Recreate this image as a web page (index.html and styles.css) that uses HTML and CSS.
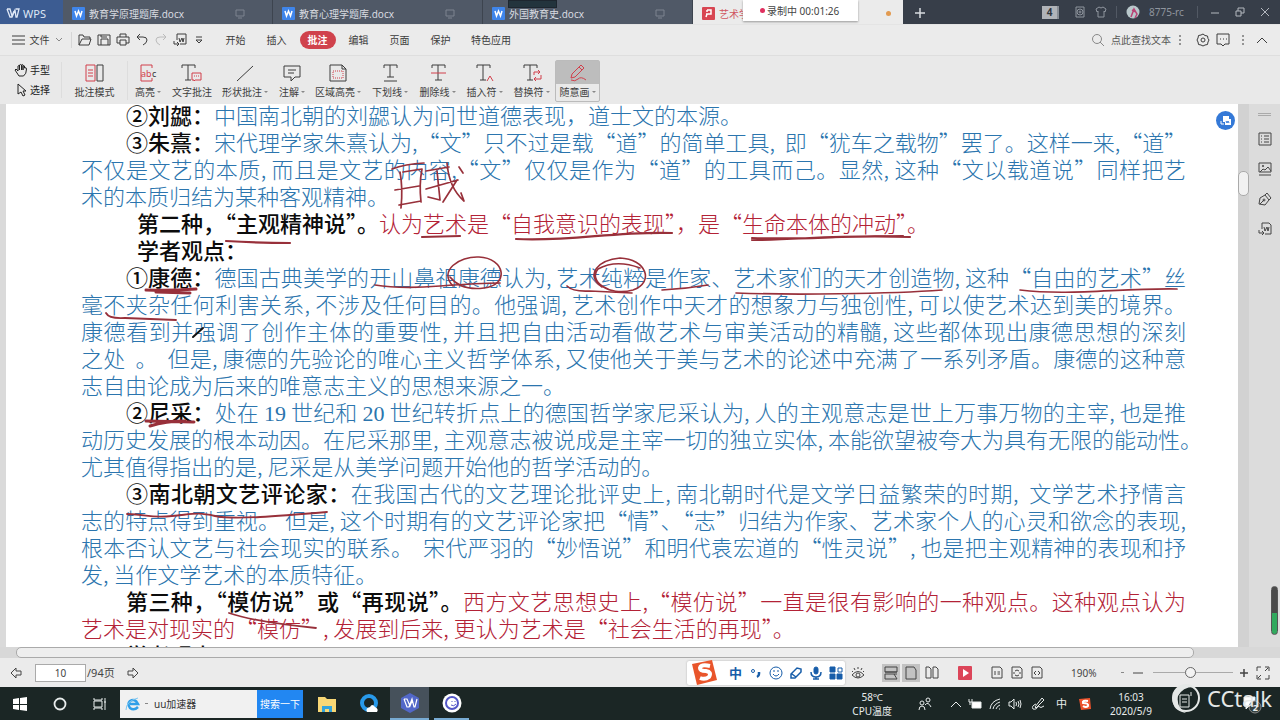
FILE: index.html
```html
<!DOCTYPE html>
<html lang="zh-CN">
<head>
<meta charset="utf-8">
<title>WPS</title>
<link rel="stylesheet" href="styles.css">
</head>
<body>
<header class="titlebar">
  <button class="home"><svg width="14" height="11" viewBox="0 0 14 11"><path d="M1 1h3l2 7 2-5M1 1l3 8h2L9 2l1 7h1l2-8h-3" stroke-width="1.3"/></svg>WPS</button>
  <button class="tab"><svg class="doc-icon" width="13" height="13" viewBox="0 0 13 13"><rect width="13" height="13" rx="1"/><path d="M3 4l1.500 5 2-5 2 5L10 4"/></svg><span>教育学原理题库.docx</span><svg class="monitor" width="10" height="10" viewBox="0 0 10 10"><path d="M1 1h8v6H1zM3 9h4"/></svg></button>
  <button class="tab"><svg class="doc-icon" width="13" height="13" viewBox="0 0 13 13"><rect width="13" height="13" rx="1"/><path d="M3 4l1.500 5 2-5 2 5L10 4"/></svg><span>教育心理学题库.docx</span><svg class="monitor" width="10" height="10" viewBox="0 0 10 10"><path d="M1 1h8v6H1zM3 9h4"/></svg></button>
  <button class="tab"><svg class="doc-icon" width="13" height="13" viewBox="0 0 13 13"><rect width="13" height="13" rx="1"/><path d="M3 4l1.500 5 2-5 2 5L10 4"/></svg><span>外国教育史.docx</span><svg class="monitor" width="10" height="10" viewBox="0 0 10 10"><path d="M1 1h8v6H1zM3 9h4"/></svg></button>
  <button class="tab active"><svg class="doc-icon pdf" width="13" height="13" viewBox="0 0 13 13"><rect width="13" height="13" rx="1"/><path d="M5 3h4v4H5M5 3v2M5 7l-1 3M4 7h2"/></svg><span>艺术学</span><i class="unsaved"></i></button>
  <button class="add" aria-label="新建"><svg width="12" height="12" viewBox="0 0 12 12"><path d="M6 1v10M1 6h10" stroke-width="1.5"/></svg></button>
  <div class="window-tools">
    <span class="count">4</span>
    <svg width="12" height="12" viewBox="0 0 12 12"><path d="M2 1h8v10H2z"/><circle cx="6" cy="6" r="3"/><circle cx="6" cy="6" r="1"/></svg>
    <svg width="12" height="12" viewBox="0 0 12 12"><path d="M4 1L1 3l1 3 1-1v6h6V5l1 1 1-3-3-2-2 1z"/></svg>
    <i class="rule"></i>
    <svg width="14" height="14" viewBox="0 0 14 14"><circle cx="7" cy="7" r="6.500" fill="#b9c8cb" stroke="none"/><path d="M5 12l3-8 3 5-2 4M6 5l4 2" stroke="#b94375" stroke-width="1.500"/></svg>
    <span class="user">8775-rc</span>
    <i class="rule"></i>
    <button aria-label="最小化"><svg width="10" height="10" viewBox="0 0 10 10"><path d="M1 6h8"/></svg></button>
    <button aria-label="还原"><svg width="10" height="10" viewBox="0 0 10 10"><path d="M1 4h5v5H1zM3 4V1h6v5H6"/></svg></button>
    <button aria-label="关闭"><svg width="10" height="10" viewBox="0 0 10 10"><path d="M1 1l8 8M9 1L1 9"/></svg></button>
  </div>
  <div class="mini"></div>
  <div class="recording"><i></i>录制中 00:01:26</div>
</header>

<nav class="menu">
  <button class="file"><svg width="13" height="10" viewBox="0 0 13 10"><path d="M0 1h13M0 5h13M0 9h13"/></svg>文件<svg width="8" height="6" viewBox="0 0 8 6"><path d="M1 1l3 3 3-3" stroke="#888"/></svg></button>
  <div class="quick">
    <button aria-label="打开"><svg width="14" height="14" viewBox="0 0 14 14"><path d="M1 12V2h4l1 2h6v2M1 12L4 6h9l-2 6z"/></svg></button>
    <button aria-label="保存"><svg width="14" height="14" viewBox="0 0 14 14"><path d="M1 12V2h12v10H1M4 12V6h7v6M4 2v2h6"/></svg></button>
    <button aria-label="打印"><svg width="14" height="14" viewBox="0 0 14 14"><path d="M4 4V1h6v3M4 10H1V4h12v6h-3M4 7h6v5H4z"/></svg></button>
    <button aria-label="撤销"><svg width="14" height="14" viewBox="0 0 14 14"><path d="M5 1L2 4l3 3M2 4h6q4 0 4 3t-4 5"/></svg></button>
    <button aria-label="恢复" class="faint"><svg width="14" height="14" viewBox="0 0 14 14"><path d="M9 1l3 3-3 3M12 4H6Q2 4 2 7t4 5"/></svg></button>
    <button aria-label="导出"><svg width="14" height="14" viewBox="0 0 14 14"><path d="M4 7V1h9v10H7M6 5l1 4 2-4 1 4 1-4M1 8v3h5M4 9l2 2-2 2"/></svg></button>
    <button aria-label="更多"><svg width="10" height="8" viewBox="0 0 10 8"><path d="M2 1h6M2 4h6L5 7z"/></svg></button>
  </div>
  <div class="menu-tabs"><button>开始</button><button>插入</button><button class="on"><b>批注</b></button><button>编辑</button><button>页面</button><button>保护</button><button class="wide">特色应用</button></div>
  <div class="menu-right">
    <label for="find"><svg width="14" height="14" viewBox="0 0 14 14"><circle cx="6" cy="6" r="4.500" stroke="#888"/><path d="M9 9l4 4" stroke="#888"/></svg></label>
    <input id="find" placeholder="点此查找文本">
    <svg width="4" height="12" viewBox="0 0 4 12"><path d="M2 1v2M2 5v2M2 9v2"/></svg>
    <button class="gear" aria-label="设置"><svg width="14" height="14" viewBox="0 0 14 14"><path d="M7 1l2 1.500 2.500.5.500 2.500L13 7l-1 2-.5 2.500-2.500.5-2 1-2-1-2.500-.5L2 9 1 7l1-2 .5-2.500L5 2z"/><circle cx="7" cy="7" r="2"/></svg></button>
    <button aria-label="反馈"><svg width="14" height="14" viewBox="0 0 14 14"><path d="M1 1h12v10H9l-2 2-2-2H1zM4 6h1M7 6h1M10 6h1"/></svg></button>
    <svg class="dots" width="4" height="12" viewBox="0 0 4 12"><path d="M2 1v2M2 5v2M2 9v2"/></svg>
    <button aria-label="收起"><svg width="12" height="8" viewBox="0 0 12 8"><path d="M1 7l5-5 5 5"/></svg></button>
  </div>
</nav>

<section class="ribbon">
  <div class="pointer">
    <button><svg width="14" height="14" viewBox="0 0 14 14"><path d="M5 13L1 7l1-1 2 2V3q1-1 1.500 0V7 2Q7 1 7.500 2v5V2q1-1 1.500 0v5-4q1-1 1.500 0v2q2-1 2 1 0 5-3 7z"/></svg>手型</button>
    <button><svg width="14" height="14" viewBox="0 0 14 14"><path d="M4 1v10l3-2 2 4 2-1-2-4h3z"/></svg>选择</button>
  </div>
  <div class="mode"><button class="tool"><svg width="20" height="18" viewBox="0 0 20 18"><path d="M1 1h9v16H1zM3 6h5M3 9h5M3 12h5" class="r"/><path d="M12 1h6v16h-6z"/></svg><span>批注模式</span></button></div>
  <button class="tool w40"><svg width="20" height="18" viewBox="0 0 20 18"><path d="M14 4V1H3v16h11v-3" class="r"/><text x="3" y="13" fill="#d13f4b">ab</text><text x="14" y="13" fill="#333">c</text></svg><span class="more">高亮</span></button>
  <button class="tool w48"><svg width="22" height="18" viewBox="0 0 22 18"><path d="M1 4V1h13v3M7 1v15M4 16h6"/><path d="M11 9h9v7h-6l-1 1v-1h-2zM13 12h1M15 12h1M17 12h1" class="r"/></svg><span>文字批注</span></button>
  <button class="tool w58"><svg width="20" height="18" viewBox="0 0 20 18"><path d="M2 17L18 2"/></svg><span class="more">形状批注</span></button>
  <button class="tool w36"><svg width="20" height="18" viewBox="0 0 20 18"><path d="M2 2h16v11h-5l-4 4v-4H2zM6 6h8M6 9h6"/></svg><span class="more">注解</span></button>
  <button class="tool w56"><svg width="20" height="18" viewBox="0 0 20 18"><path d="M2 1h12l4 4v12H2zM14 1v4h4"/><path d="M5 7h10v7H5z" class="r" stroke-dasharray="1 1"/></svg><span class="more">区域高亮</span></button>
  <button class="tool w48"><svg width="20" height="18" viewBox="0 0 20 18"><path d="M4 4V1h13v3M10 1v12M7 13h7M4 17h13"/></svg><span class="more">下划线</span></button>
  <button class="tool"><svg width="20" height="18" viewBox="0 0 20 18"><path d="M4 4V1h13v3M10 1v15M7 16h7"/><path d="M3 9h15" class="r"/></svg><span class="more">删除线</span></button>
  <button class="tool"><svg width="20" height="18" viewBox="0 0 20 18"><path d="M2 4V1h13v3M8 1v15M5 16h6"/><path d="M12 17l3-5 3 5" class="r"/></svg><span class="more">插入符</span></button>
  <button class="tool"><svg width="20" height="18" viewBox="0 0 20 18"><path d="M2 4V1h13v3M8 1v15M5 16h6"/><path d="M12 11V8h6M16 6l2 2-2 2M19 11v4h-7M14 13l-2 2 2 2" class="r"/></svg><span class="more">替换符</span></button>
  <button class="tool draw"><i><svg width="20" height="18" viewBox="0 0 20 18"><path d="M4 10L13 1l3 3-9 9-4 1zM11 3l3 3M3 16q4 2 7-1t8 1" class="r"/></svg></i><span class="more">随意画</span></button>
</section>

<main class="workspace">
  <div class="gutter"></div>
  <article class="page">
    <p class="in"><b>②刘勰：</b>中国南北朝的刘勰认为问世道德表现，道士文的本源。</p>
    <p class="in full"><b>③朱熹：</b>宋代理学家朱熹认为,“文”只不过是载“道”的简单工具,&nbsp; 即“犹车之载物”罢了。这样一来,“道”</p>
    <p class="full">不仅是文艺的本质, 而且是文艺的内容,“文”仅仅是作为“道”的工具而己。显然, 这种“文以载道说”同样把艺</p>
    <p>术的本质归结为某种客观精神。</p>
    <p class="in2 red"><b>第二种，“主观精神说”。</b>认为艺术是“自我意识的表现”，是“生命本体的冲动”。</p>
    <p class="in2"><b>学者观点：</b></p>
    <p class="in full"><b>①康德：</b>德国古典美学的开山鼻祖康德认为, 艺术纯粹是作家、艺术家们的天才创造物, 这种“自由的艺术”丝</p>
    <p class="full">毫不夹杂任何利害关系, 不涉及任何目的。他强调, 艺术创作中天才的想象力与独创性, 可以使艺术达到美的境界。</p>
    <p class="full">康德看到并强调了创作主体的重要性, 并且把自由活动看做艺术与审美活动的精髓, 这些都体现出康德思想的深刻</p>
    <p class="full">之处&nbsp; 。&nbsp; 但是, 康德的先验论的唯心主义哲学体系, 又使他关于美与艺术的论述中充满了一系列矛盾。康德的这种意</p>
    <p>志自由论成为后来的唯意志主义的思想来源之一。</p>
    <p class="in full"><b>②尼采：</b>处在 <span class="num">19</span> 世纪和 <span class="num">20</span> 世纪转折点上的德国哲学家尼采认为, 人的主观意志是世上万事万物的主宰, 也是推</p>
    <p class="full hang">动历史发展的根本动因。在尼采那里, 主观意志被说成是主宰一切的独立实体, 本能欲望被夸大为具有无限的能动性。</p>
    <p>尤其值得指出的是, 尼采是从美学问题开始他的哲学活动的。</p>
    <p class="in full"><b>③南北朝文艺评论家：</b>在我国古代的文艺理论批评史上, 南北朝时代是文学日益繁荣的时期,&nbsp; 文学艺术抒情言</p>
    <p class="full">志的特点得到重视。 但是, 这个时期有的文艺评论家把“情”、“志”归结为作家、艺术家个人的心灵和欲念的表现,</p>
    <p class="full">根本否认文艺与社会现实的联系。&nbsp; 宋代严羽的“妙悟说”和明代袁宏道的“性灵说”, 也是把主观精神的表现和抒</p>
    <p>发, 当作文学艺术的本质特征。</p>
    <p class="in full red"><b>第三种，“模仿说”或“再现说”。</b>西方文艺思想史上,“模仿说”一直是很有影响的一种观点。这种观点认为</p>
    <p class="red">艺术是对现实的“模仿”, 发展到后来, 更认为艺术是“社会生活的再现”。</p>
    <p class="in"><b>学者观点：</b></p>
  </article>
  <div class="vscroll"><i class="thumb"></i></div>
  <aside class="side">
    <i class="grip"></i>
    <button aria-label="目录"><svg width="14" height="14" viewBox="0 0 14 14"><path d="M1 1h12v12H1zM3 4h1M6 4h5M3 7h1M6 7h5M3 10h1M6 10h5"/></svg></button>
    <button aria-label="图片"><svg width="14" height="14" viewBox="0 0 14 14"><path d="M1 1h12v9H1zM2 10l3-3 2 1 3-3 3 4M1 13h12"/><circle cx="5" cy="4" r=".7"/></svg></button>
    <button aria-label="签名"><svg width="14" height="14" viewBox="0 0 14 14"><path d="M1 12l1-6 5-3 4 5-4 5zM7 3l2-2 4 5-2 2M2 12l4-4"/><circle cx="6" cy="8" r="1"/></svg></button>
    <button aria-label="转换"><svg width="14" height="14" viewBox="0 0 14 14"><path d="M4 7V1h7l2 2v9H7M6 5l1 4 2-4 1 4 1-4M1 8v3h5M4 9l2 2-2 2"/></svg></button>
  </aside>
  <svg class="ink" width="1280" height="543" viewBox="0 104 1280 543">
    <path d="M392 169Q405 164 424 163M400 172Q403 188 401 208M403 172L422 169Q419 184 421 202M395 190L419 186M399 205L421 201M426 171L449 167M426 189L458 180M437 171L440 200L428 197M447 163Q449 188 464 201L461 193M457 180L443 202M459 167L463 173" stroke-width="1.700"/>
    <path d="M226 241Q260 243 290 243M422 237L460 236M516 239C570 242 615 231 672 233M752 240C800 240 840 234 910 237M752 238C800 240 830 236 903 236"/>
    <path d="M375 285Q400 289 440 286T500 283M567 286Q573 292 590 291L632 293M662 290Q685 289 708 285M736 293C790 295 890 294 942 290M1020 290C1070 296 1120 288 1177 289" stroke-width="1.700"/>
    <path d="M453 286C438 271 459 256 479 257C505 258 510 285 484 288Q461 291 450 277M602 287C584 274 599 260 620 258C646 259 655 282 633 290C608 297 588 280 598 269Q616 259 640 268" stroke-width="1.600"/>
    <path d="M146 290Q170 291 196 289M156 292L190 293M146 421L194 422M150 426Q166 421 185 421" stroke-width="3"/>
    <path d="M106 313Q109 319 125 318L176 320M127 514C150 515 150 518 172 516S197 512 215 516S280 516 327 512M229 613Q255 622 316 628" stroke-width="1.800"/>
    <path d="M193 337L203 328" stroke="#111" stroke-width="2"/>
  </svg>
  <button class="convert" aria-label="转换文档"><svg width="12" height="12" viewBox="0 0 12 12"><path d="M3 1h6v3h2v6H5V7H3z" fill="#fff" stroke="none"/><path d="M1 6v3h3" stroke="#fff"/><path d="M6 6l1 2 1-2 1 2" stroke="#3479d7"/></svg></button>
  <div class="meter"></div>
</main>
<div class="hscroll"><i></i></div>

<footer class="status">
  <button aria-label="上一页"><svg width="12" height="12" viewBox="0 0 12 12"><path d="M6 1L1 6l5 5V8h5V4H6z"/></svg></button>
  <input class="page-no" value="10" aria-label="页码"><span class="total">/94页</span>
  <button aria-label="下一页"><svg width="12" height="12" viewBox="0 0 12 12"><path d="M6 1l5 5-5 5V8H1V4h5z"/></svg></button>
  <div class="views">
    <button class="eye" aria-label="护眼"><svg width="14" height="14" viewBox="0 0 14 14"><path d="M1 9q6-7 12 0-6 6-12 0M7 1v2M3 2l1 2M11 2l-1 2M1 5l1 1M13 5l-1 1"/><circle cx="7" cy="9" r="2"/></svg></button>
    <button class="sel first" aria-label="连续"><svg width="14" height="14" viewBox="0 0 14 14"><path d="M1 1h12v5H1zM13 8H1v5h12l-3-5M1 6h12"/></svg></button>
    <button class="sel" aria-label="单页"><svg width="12" height="14" viewBox="0 0 12 14"><path d="M1 1h8l2 3v9H1z"/></svg></button>
    <button aria-label="双页"><svg width="14" height="14" viewBox="0 0 14 14"><path d="M1 1h3l2 2v9H1zM8 1h3l2 2v9H8z"/></svg></button>
    <button class="play" aria-label="播放"><svg width="14" height="14" viewBox="0 0 14 14"><rect width="14" height="14" rx="1" fill="#dc4559" stroke="none"/><path d="M5 3l6 4-6 4z" fill="#fff" stroke="none"/></svg></button>
    <button aria-label="实际大小"><svg width="12" height="13" viewBox="0 0 12 13"><path d="M1 1h8l2 2v9H1zM4 5v4M8 5v4M6 6h.5M6 8h.5"/></svg></button>
    <button aria-label="适合页面"><svg width="12" height="13" viewBox="0 0 12 13"><path d="M1 1h8l2 2v9H1zM4 5l2-1 2 1M4 9l2 1 2-1M3 6v2M9 6v2"/></svg></button>
    <button aria-label="适合宽度"><svg width="12" height="13" viewBox="0 0 12 13"><path d="M1 1h8l2 2v9H1zM5 5L3 7l2 2M7 5l2 2-2 2"/></svg></button>
    <span class="zoom">190%</span><i class="tick"></i>
    <button class="sm" aria-label="缩小"><svg width="12" height="12" viewBox="0 0 12 12"><path d="M1 6h10"/></svg></button>
    <input type="range" min="0" max="100" value="46" aria-label="缩放">
    <button class="sm plus" aria-label="放大"><svg width="12" height="12" viewBox="0 0 12 12"><path d="M2 6h8M6 2v8" stroke-width="1.500"/></svg></button>
    <button aria-label="全屏"><svg width="14" height="14" viewBox="0 0 14 14"><path d="M1 5V1h4M9 1h4v4M13 9v4H9M5 13H1V9M9 5l3-3M5 9l-3 3"/></svg></button>
  </div>
  <div class="ime">
    <svg width="28" height="26" viewBox="0 0 28 26"><path d="M2 4L22 0l5 20L7 25z" fill="#e9552b" stroke="none"/><path d="M20 6q-9-2-10 2 0 3 6 3 6 1 3 6-4 3-9 1" stroke="#fff" stroke-width="4"/></svg>
    <b>中</b>
    <svg width="14" height="14" viewBox="0 0 14 14"><circle cx="4" cy="5" r="1.500"/><path d="M10 6v2q0 2-2 3" stroke-width="2.500"/></svg>
    <svg width="14" height="14" viewBox="0 0 14 14"><circle cx="7" cy="7" r="6"/><path d="M5 4v2M9 4v2M4 8q3 4 6 0"/></svg>
    <svg width="14" height="14" viewBox="0 0 14 14"><path d="M2 12V8l6-6 4 1v3l-6 6zM3 8l4 3" stroke-width="1.500"/></svg>
    <svg width="14" height="14" viewBox="0 0 14 14"><rect x="5" y="1" width="4" height="7" rx="2" fill="#175da9"/><path d="M2 6q0 5 5 5t5-5M7 11v2M4 13h6" stroke-width="1.500"/></svg>
    <svg width="14" height="14" viewBox="0 0 14 14"><path d="M1 1h5v5H1zM1 8h5v5H1zM8 8h5v5H8z" fill="#175da9"/><path d="M9 2h4v4H9z"/></svg>
  </div>
</footer>

<section class="taskbar">
  <button class="slot" aria-label="开始"><svg width="14" height="14" viewBox="0 0 14 14"><path d="M0 2l6-1v6H0zM7 1l7-1v7H7zM0 8h6v5l-6-1zM7 8h7v6l-7-1z" fill="#fff" stroke="none"/></svg></button>
  <button class="slot" aria-label="Cortana"><svg width="14" height="14" viewBox="0 0 14 14"><circle cx="7" cy="7" r="5.500" stroke-width="1.800"/></svg></button>
  <button class="slot" aria-label="任务视图"><svg width="14" height="14" viewBox="0 0 14 14"><path d="M1 4h8v6H1zM1 1v2h8V1M1 13v-2h8v2M12 1v12M11 5h2"/></svg></button>
  <div class="search">
    <svg width="16" height="16" viewBox="0 0 16 16"><path d="M13 11Q9 15 5 12 2 8 5 5 10 2 13 8H5" stroke="#319fe8" stroke-width="2.500"/><path d="M1 14Q1 5 13 2" stroke="#80c8f1"/></svg>
    <i></i><input value="uu加速器" aria-label="搜索"><button>搜索一下</button>
  </div>
  <div class="apps">
    <button aria-label="文件夹"><svg width="20" height="18" viewBox="0 0 20 18"><path d="M1 2h7l2 2h9v13H1z" fill="#f8d775" stroke="none"/><path d="M5 17v-6h10v6h-3v-3H8v3z" fill="#32a4dc" stroke="none"/></svg></button>
    <button aria-label="浏览器"><svg width="20" height="20" viewBox="0 0 20 20"><circle cx="10" cy="9" r="7" stroke="#2899ea" stroke-width="4"/><path d="M8 18q-2-4 3-5 2-4 5 0 4 2 2 5z" fill="#fff" stroke="none"/></svg></button>
    <button class="current" aria-label="WPS"><svg width="20" height="20" viewBox="0 0 20 20"><path d="M10 0l9 5v10l-9 5-9-5V5z" fill="#5267c8" stroke="none"/><path d="M4 6h3l3 7 2-5M4 6l3 8h2l3-8 2 8h1l2-8" stroke="#fff" stroke-width="1.200"/></svg></button>
    <button class="running" aria-label="CCtalk"><svg width="20" height="20" viewBox="0 0 20 20"><circle cx="10" cy="10" r="9.500" fill="#fff" stroke="none"/><circle cx="10" cy="10" r="6" stroke="#5457c7" stroke-width="2"/><path d="M10 8v1M13 8v1M9 12q3 2 5-1" stroke="#5457c7"/></svg></button>
  </div>
  <div class="tray">
    <div class="temp">58℃<br>CPU温度</div>
    <svg class="people" width="14" height="14" viewBox="0 0 14 14"><circle cx="4" cy="6" r="2"/><circle cx="10" cy="3" r="2"/><path d="M1 13q0-4 3-4t3 4M7 8q3-4 6 2"/></svg>
    <svg width="12" height="12" viewBox="0 0 12 12"><path d="M1 9l5-5 5 5"/></svg>
    <svg width="14" height="12" viewBox="0 0 14 12"><path d="M4 4h9v6H4z" fill="#fff"/><path d="M1 1v3h3V1M2 4v3"/></svg>
    <svg width="14" height="14" viewBox="0 0 14 14"><path d="M2 12Q3 4 12 2M5 12q1-5 7-7M8 12q1-3 4-4M11 12h1"/></svg>
    <svg width="14" height="12" viewBox="0 0 14 12"><path d="M1 4h2l3-3v10L3 8H1zM8 4q1 2 0 4M10 3q2 3 0 6M12 2q2 4 0 8"/></svg>
    <svg class="pen" width="14" height="14" viewBox="0 0 14 14"><path d="M4 10L11 1l2 2-8 8zM5 7q-5 2-3 5 4 1 5-3 3 3 6 0"/></svg>
    <span class="zh">中</span>
    <svg width="14" height="14" viewBox="0 0 14 14"><path d="M1 2l11-1 1 11-10 1z" fill="#ed522b" stroke="none"/><path d="M10 4Q4 3 5 6q6 0 5 3-2 2-5 0" stroke="#fff" stroke-width="2"/></svg>
    <div class="clock">16:03<br>2020/5/9</div>
    <button class="notice" aria-label="通知"><svg width="20" height="20" viewBox="0 0 20 20"><path d="M2 3h11v9H7l-3 3v-3H2z" fill="#fff"/><circle cx="13" cy="13" r="6" fill="#34403e" stroke="#888"/></svg><b>2</b></button>
  </div>
  <div class="brand"><svg width="34" height="32" viewBox="0 0 34 32"><circle cx="17" cy="16" r="13" stroke="#e5e8e7" stroke-width="2"/><path d="M27 5Q10-2 4 13 1 28 17 31 7 25 9 14 14 4 27 5" fill="#e5e8e7" stroke="none"/><path d="M11 13h9v12h-9zM13 17h5M13 20h5M22 10v4" stroke="#e5e8e7"/></svg>CCtalk</div>
</section>
</body>
</html>
```
FILE: styles.css
```css
* { box-sizing: border-box; }
body { margin: 0; height: 100vh; display: flex; flex-direction: column; overflow: hidden; background: #ebebeb; color: #3c3c3c; font: 10px/16px "Noto Sans", "Noto Sans CJK SC", sans-serif; }
button { font: inherit; color: inherit; background: none; border: 0; padding: 0; display: flex; align-items: center; justify-content: center; white-space: nowrap; }
input { font: inherit; color: inherit; border: 0; padding: 0; min-width: 0; }
svg { fill: none; stroke: currentColor; flex: none; }
i { font-style: normal; flex: none; }
.r { stroke: #d13f4b; }

.titlebar { position: relative; flex: none; height: 25px; display: flex; background: #373e49; color: #d8dbe0; border-bottom: 1px solid #e4e4e4; }
.home { width: 63px; justify-content: flex-start; padding: 3px 0 0 6px; gap: 3px; background: #3c5c92; font-size: 11px; color: #dfe8f6; }
.tab { width: 210px; justify-content: flex-start; padding: 3px 27px 0 9px; gap: 4px; background: #505967; border-right: 1px solid #3d444f; }
.tab span { flex: 1; text-align: left; }
.monitor { color: #7d8490; }
.doc-icon { fill: #3f85ea; stroke: none; }
.doc-icon path { fill: none; stroke: #fff; stroke-width: 1.5px; }
.doc-icon.pdf { fill: #d84652; }
.tab.active { background: #ebebeb; color: #d05660; border: 0; padding-right: 12px; }
.unsaved { width: 5px; height: 5px; border-radius: 50%; background: #e29a50; }
.add { width: 34px; padding-top: 2px; }
.window-tools { flex: 1; display: flex; align-items: center; justify-content: flex-end; gap: 9px; padding-right: 7px; color: #8f959e; }
.window-tools button { width: 16px; color: #b4b8bf; }
.count { width: 17px; height: 13px; margin-right: 6px; background: #b0b3b8; color: #30353d; text-align: center; line-height: 13px; font-weight: 700; border-right: 2px solid #888d95; }
.rule { width: 1px; height: 12px; background: #525964; }
.user { font-size: 10px; width: 39px; white-space: nowrap; }
.mini { position: absolute; left: 508px; top: 0; width: 49px; height: 8px; background: #23343d; border: 1px solid #1d262f; }
.recording { position: absolute; left: 743px; top: 0; width: 115px; height: 21px; display: flex; align-items: center; padding-left: 17px; gap: 2px; background: #fff; color: #444; box-shadow: 0 1px 2px #999; font-size: 10px; white-space: nowrap; }
.recording i { width: 5px; height: 5px; border-radius: 50%; background: #e0305f; }

.menu { flex: none; height: 31px; display: flex; align-items: center; border-bottom: 1px solid #dedede; }
.file { width: 72px; gap: 5px; border-right: 1px solid #d6d6d6; padding-left: 3px; height: 16px; }
.quick { display: flex; padding-left: 3px; }
.quick button { width: 19px; }
.faint { color: #bbb; }
.menu-tabs { display: flex; padding-left: 7px; }
.menu-tabs button { width: 41px; height: 18px; }
.menu-tabs .wide { width: 60px; }
.menu-tabs .on b { background: #d0424c; color: #fff; border-radius: 9px; width: 36px; line-height: 18px; }
.menu-right { margin-left: auto; display: flex; align-items: center; gap: 6px; padding-right: 12px; }
.menu-right label { display: flex; }
.menu-right input { width: 61px; background: none; }
.menu-right input::placeholder { color: #555; opacity: 1; }
.gear { padding-left: 8px; }
.menu-right .dots { margin: 0 5px; }

.ribbon { flex: none; height: 48px; display: flex; align-items: center; background: #e9e9e9; }
.pointer { width: 62px; display: flex; flex-direction: column; align-items: flex-start; gap: 4px; padding-left: 14px; border-right: 1px solid #ddd; }
.pointer button { gap: 2px; color: #222; }
.mode { width: 66px; display: flex; justify-content: center; border-right: 1px solid #ddd; }
.tool { width: 47px; padding-top: 3px; flex-direction: column; gap: 2px; }
.tool text { font: 9px "Noto Sans", sans-serif; stroke: none; }
.w36 { width: 36px; } .w40 { width: 40px; } .w48 { width: 48px; } .w56 { width: 56px; } .w58 { width: 58px; }
.more::after { content: ""; display: inline-block; border: 2px solid transparent; border-top-color: #888; margin: 0 0 1px 2px; }
.draw { gap: 0; width: 45px; height: 42px; padding: 0; justify-content: flex-start; margin-top: 2px; border: 1px solid #bbb; border-radius: 2px; }
.draw i { align-self: stretch; height: 23px; display: flex; justify-content: center; align-items: center; background: #bdbdbd; }

.workspace { position: relative; flex: 1; min-height: 0; display: flex; overflow: hidden; background: #fff; }
.gutter { width: 6px; background: #dadada; }
.page { flex: 1; min-width: 0; margin-top: -3px; padding: 0 52px 0 75px; color: #2b75ae; font: 22px/27px "Noto Sans CJK SC", sans-serif; font-weight: 300; }
.page p { margin: 0; height: 27px; white-space: nowrap; }
.page b { color: #0c0c0c; font-weight: 500; }
.page .in { padding-left: 45px; }
.page .in2 { padding-left: 56px; }
.page .full { text-align: justify; text-align-last: justify; }
.page .hang { margin-right: -16px; }
.page .red { color: #b32236; }
.num { font-family: "Liberation Serif", serif; }
.vscroll { width: 11px; background: #d2d2d2; padding-top: 67px; }
.thumb { display: block; height: 25px; background: #f1f1f1; border: 1px solid #aaa; border-radius: 5px; }
.side { width: 31px; display: flex; flex-direction: column; align-items: center; gap: 16px; background: #dcdcdc; color: #444; }
.side button { height: 14px; }
.grip { width: 13px; height: 3px; margin: 9px 0 0; border-top: 1px solid #aaa; border-bottom: 1px solid #aaa; }
.ink { position: absolute; left: 0; top: 0; pointer-events: none; stroke: #98303a; stroke-width: 2.200px; stroke-linecap: round; stroke-linejoin: round; }
.convert { position: absolute; right: 45px; top: 7px; width: 19px; height: 19px; border-radius: 50%; background: #3479d7; }
.meter { position: absolute; right: 2px; bottom: 12px; width: 7px; height: 49px; border: 1px solid #555; border-radius: 4px; background: linear-gradient(#4a4a4a 55%, #31a95e 55%); }
.hscroll { flex: none; height: 11px; background: #d8d8d8; padding: 0 86px 0 16px; }
.hscroll i { display: block; height: 11px; background: #eee; border: 1px solid #aaa; border-radius: 5px; }

.status { position: relative; flex: none; height: 29px; display: flex; align-items: center; padding-left: 10px; color: #444; }
.page-no { width: 51px; height: 18px; margin-left: 13px; border: 1px solid #aaa; background: #fff; text-align: center; }
.total { width: 41px; padding-left: 1px; font-size: 11px; }
.views { margin-left: auto; display: flex; align-items: center; padding-right: 7px; }
.views button { width: 20px; height: 18px; }
.views .sel { width: 18px; margin-right: 2px; background: #c3c3c3; }
.views .first { margin-left: 14px; }
.views .play { margin: 0 12px 0 13px; }
.zoom { margin-left: 24px; width: 50px; font-size: 10px; }
.tick { width: 3px; height: 1px; background: #888; margin-right: 8px; }
.views .sm { width: 12px; }
.views .plus { margin-right: 3px; }
.views input { width: 80px; height: 14px; margin: 0 5px 0 9px; appearance: none; background: linear-gradient(#aaa, #aaa) center / 100% 1px no-repeat; }
.views input::-webkit-slider-thumb { appearance: none; width: 11px; height: 11px; border: 1px solid #666; border-radius: 50%; background: #f3f3f3; }
.ime { position: absolute; right: 435px; top: 3px; width: 158px; height: 24px; display: flex; align-items: center; gap: 6px; padding-left: 3px; background: #fff; border-radius: 2px; box-shadow: 0 0 2px #aaa; color: #175da9; }
.ime b { width: 14px; margin-left: 5px; font-size: 13px; }

.taskbar { position: relative; flex: none; height: 33px; display: flex; align-items: center; background: #1b2625; color: #e8ecec; }
.slot { width: 40px; height: 33px; }
.search { width: 183px; height: 28px; display: flex; align-items: center; background: #f1f1f1; color: #333; padding-left: 5px; }
.search i { width: 3px; height: 1px; margin: 0 6px 0 4px; background: #888; }
.search input { flex: 1; background: none; }
.search button { width: 46px; height: 28px; background: #2287f2; color: #fff; }
.apps { display: flex; padding-left: 3px; }
.apps button { width: 42px; height: 33px; }
.apps .current { width: 39px; background: #46515b; border-bottom: 2px solid #78abd3; margin-right: 5px; }
.apps .running { width: 35px; border-bottom: 2px solid #78abd3; }
.tray { margin-left: auto; display: flex; align-items: center; gap: 6px; padding-right: 18px; }
.temp, .clock { text-align: center; line-height: 14px; white-space: nowrap; }
.people { margin: 0 12px 0 20px; }
.pen { margin-left: 3px; }
.zh { margin: 0 5px; font-size: 11px; }
.clock { width: 50px; margin-left: 8px; }
.notice { position: relative; margin-left: 80px; width: 20px; height: 20px; }
.notice b { position: absolute; right: 4px; bottom: 0; font-size: 9px; line-height: 12px; }
.brand { position: absolute; right: 8px; top: -5px; display: flex; align-items: center; gap: 4px; font-size: 22px; line-height: 32px; color: #e5e8e7; }
```
